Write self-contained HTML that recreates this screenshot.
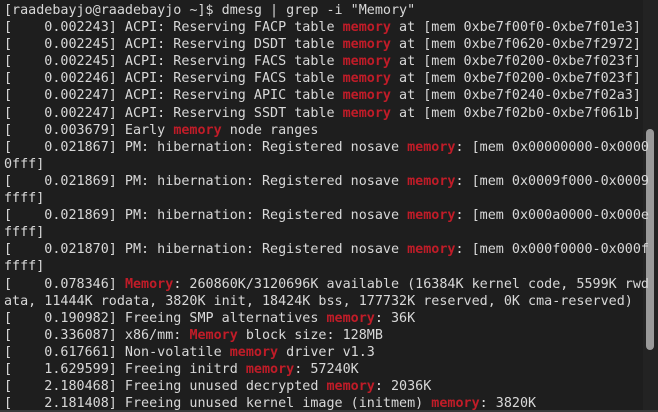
<!DOCTYPE html>
<html><head><meta charset="utf-8"><style>
html,body{margin:0;padding:0;background:#1e1e1e;width:658px;height:412px;overflow:hidden;position:relative}
pre{margin:0;position:absolute;left:4px;top:2px;font-family:"DejaVu Sans Mono","Liberation Mono",monospace;font-size:13.4px;line-height:17.1px;color:#d8d8d8;white-space:pre}
b{color:#c01c28;font-weight:bold}
.track{position:absolute;left:643px;top:0;width:15px;height:412px;background:#232323}
.thumb{position:absolute;left:646px;top:129px;width:8px;height:221px;background:#9a9a9a;border-radius:4px}
.bot{position:absolute;left:0;top:410px;width:658px;height:2px;background:#3a3a3a}
</style></head><body>
<div class="track"></div><div class="thumb"></div>
<pre>[raadebayjo@raadebayjo ~]$ dmesg | grep -i "Memory"
[    0.002243] ACPI: Reserving FACP table <b>memory</b> at [mem 0xbe7f00f0-0xbe7f01e3]
[    0.002245] ACPI: Reserving DSDT table <b>memory</b> at [mem 0xbe7f0620-0xbe7f2972]
[    0.002245] ACPI: Reserving FACS table <b>memory</b> at [mem 0xbe7f0200-0xbe7f023f]
[    0.002246] ACPI: Reserving FACS table <b>memory</b> at [mem 0xbe7f0200-0xbe7f023f]
[    0.002247] ACPI: Reserving APIC table <b>memory</b> at [mem 0xbe7f0240-0xbe7f02a3]
[    0.002247] ACPI: Reserving SSDT table <b>memory</b> at [mem 0xbe7f02b0-0xbe7f061b]
[    0.003679] Early <b>memory</b> node ranges
[    0.021867] PM: hibernation: Registered nosave <b>memory</b>: [mem 0x00000000-0x0000
0fff]
[    0.021869] PM: hibernation: Registered nosave <b>memory</b>: [mem 0x0009f000-0x0009
ffff]
[    0.021869] PM: hibernation: Registered nosave <b>memory</b>: [mem 0x000a0000-0x000e
ffff]
[    0.021870] PM: hibernation: Registered nosave <b>memory</b>: [mem 0x000f0000-0x000f
ffff]
[    0.078346] <b>Memory</b>: 260860K/3120696K available (16384K kernel code, 5599K rwd
ata, 11444K rodata, 3820K init, 18424K bss, 177732K reserved, 0K cma-reserved)
[    0.190982] Freeing SMP alternatives <b>memory</b>: 36K
[    0.336087] x86/mm: <b>Memory</b> block size: 128MB
[    0.617661] Non-volatile <b>memory</b> driver v1.3
[    1.629599] Freeing initrd <b>memory</b>: 57240K
[    2.180468] Freeing unused decrypted <b>memory</b>: 2036K
[    2.181408] Freeing unused kernel image (initmem) <b>memory</b>: 3820K</pre>
<div class="bot"></div>
</body></html>
